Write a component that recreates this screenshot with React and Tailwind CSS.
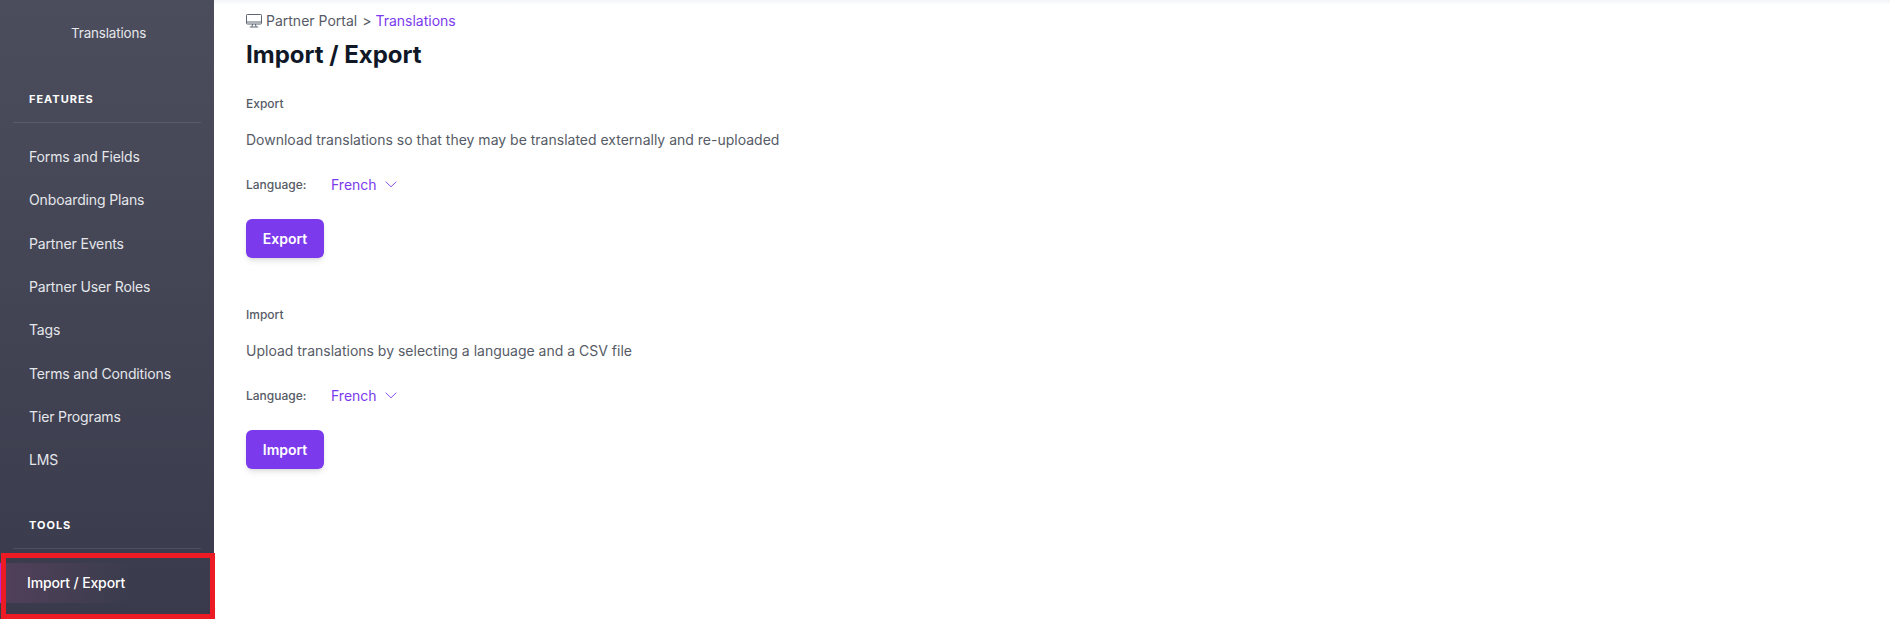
import React from "react";

const features = [
  "Forms and Fields",
  "Onboarding Plans",
  "Partner Events",
  "Partner User Roles",
  "Tags",
  "Terms and Conditions",
  "Tier Programs",
  "LMS",
];

function Chevron() {
  return (
    <svg viewBox="0 0 12 7" className="w-[12px] h-[7px] ml-[8px] mb-[2px]" fill="none" stroke="#7c3aed" strokeWidth="0.9">
      <path d="M0.7 0.7 L6 5.8 L11.3 0.7" />
    </svg>
  );
}

function Monitor() {
  return (
    <svg viewBox="0 0 16 14" className="w-[16px] h-[14px] mr-[4px]" fill="none" stroke="#4b5563" strokeWidth="0.9">
      <rect x="0.5" y="0.5" width="15" height="9.5" rx="0.8" />
      <path d="M0.5 8 H15.5" />
      <path d="M6.5 10 L6 12.8 M9.5 10 L10 12.8 M3.8 13 H12.2" />
    </svg>
  );
}

function Section({ title, desc, action, className }) {
  return (
    <section className={className}>
      <h3 className="text-xs leading-4 font-medium text-[#565b66]">{title}</h3>
      <p className="mt-[18px] text-sm leading-5 text-[#565b66]">{desc}</p>
      <div className="mt-[25px] flex items-center h-5">
        <span className="w-[85px] text-xs font-medium text-[#565b66]">Language:</span>
        <span className="text-sm text-[#7c3aed]">French</span>
        <Chevron />
      </div>
      <button className="mt-[24px] w-[78px] h-[39px] rounded-md bg-[#7c3aed] text-white text-sm font-semibold shadow-md">
        {action}
      </button>
    </section>
  );
}

export default function App() {
  return (
    <div className="relative flex h-[619px] overflow-hidden bg-white font-['Inter',sans-serif]">
      <aside className="w-[214px] shrink-0 bg-gradient-to-b from-[#4c4d5c] to-[#393b4c] text-gray-200 text-sm tracking-[-0.01em]">
        <div className="pt-[23px] pl-[71px] leading-5 text-[13.4px]">Translations</div>
        <div className="mt-[48px] pl-[29px] text-white text-[11px] leading-4 font-bold tracking-[0.09em]">FEATURES</div>
        <div className="mx-[13px] mt-[15px] border-t border-white/10" />
        <nav className="mt-[12.5px] pl-[29px]">
          {features.map((f) => (
            <div key={f} className="h-[43.3px] flex items-center">{f}</div>
          ))}
        </nav>
        <div className="mt-[35.5px] pl-[29px] text-white text-[11px] leading-4 font-bold tracking-[0.09em]">TOOLS</div>
        <div className="mx-[13px] mt-[15px] border-t border-white/10" />
        <div className="mt-[14px] h-[40px] pl-[25px] flex items-center font-medium text-white border-l-2 border-[#c026d3] bg-gradient-to-r from-[#51405a] to-transparent to-60%">
          Import / Export
        </div>
      </aside>
      <main className="flex-1 min-w-0 pl-[32px] bg-gradient-to-b from-gray-100 to-white to-[5px]">
        <div className="pt-[11px] flex items-center h-[31px] text-sm text-[#565b66]">
          <Monitor />
          <span>Partner Portal</span>
          <span className="ml-[5px] mr-[4px]">&gt;</span>
          <span className="text-[#7c3aed]">Translations</span>
        </div>
        <h1 className="mt-[8px] text-2xl leading-8 font-bold text-gray-900">Import / Export</h1>
        <Section className="mt-[25px]" title="Export" desc="Download translations so that they may be translated externally and re-uploaded" action="Export" />
        <Section className="mt-[49px]" title="Import" desc="Upload translations by selecting a language and a CSV file" action="Import" />
      </main>
      <div className="absolute left-[1px] top-[553px] w-[214px] h-[66px] border-[5px] border-[#ed1c24]" />
    </div>
  );
}
